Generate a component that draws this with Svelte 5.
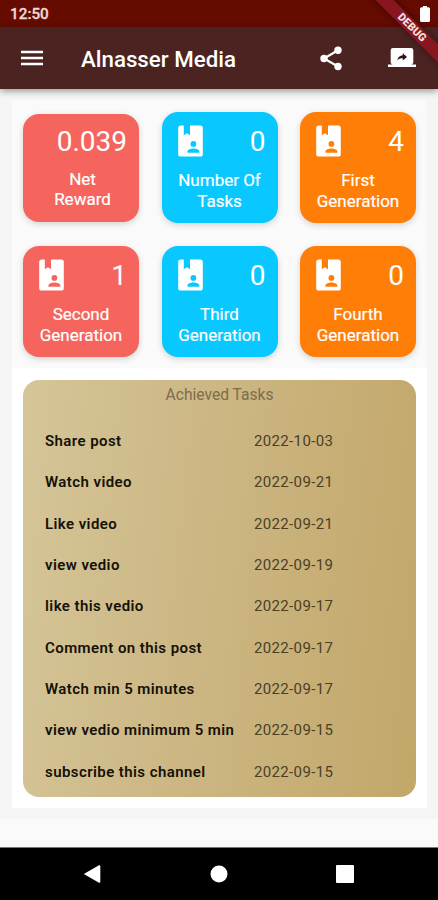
<script lang="ts">
  interface Stat {
    label: [string, string];
    value: string;
    color: 'red' | 'blue' | 'orange';
    icon: boolean;
  }

  interface Task { name: string; date: string; }

  const stats: Stat[] = [
    { label: ['Net', 'Reward'], value: '0.039', color: 'red', icon: false },
    { label: ['Number Of', 'Tasks'], value: '0', color: 'blue', icon: true },
    { label: ['First', 'Generation'], value: '4', color: 'orange', icon: true },
    { label: ['Second', 'Generation'], value: '1', color: 'red', icon: true },
    { label: ['Third', 'Generation'], value: '0', color: 'blue', icon: true },
    { label: ['Fourth', 'Generation'], value: '0', color: 'orange', icon: true },
  ];

  const tasks: Task[] = [
    { name: 'Share post', date: '2022-10-03' },
    { name: 'Watch video', date: '2022-09-21' },
    { name: 'Like video', date: '2022-09-21' },
    { name: 'view vedio', date: '2022-09-19' },
    { name: 'like this vedio', date: '2022-09-17' },
    { name: 'Comment on this post', date: '2022-09-17' },
    { name: 'Watch min 5 minutes', date: '2022-09-17' },
    { name: 'view vedio minimum 5 min', date: '2022-09-15' },
    { name: 'subscribe this channel', date: '2022-09-15' },
  ];
</script>

<div class="screen">
  <div class="status-bar">
    <span class="clock">12:50</span>
    <svg class="battery" width="10" height="16" viewBox="0 0 10 16">
      <path d="M3 0h4v1.200h1.500Q10 1.200 10 2.700v11.800Q10 16 8.500 16h-7Q0 16 0 14.500V2.700Q0 1.200 1.500 1.200H3z" fill="#fff" />
    </svg>
  </div>

  <header class="app-bar">
    <svg class="menu" width="22" height="16" viewBox="0 0 22 16">
      <path d="M0 .7h22v2.600H0zM0 6.700h22v2.600H0zM0 12.700h22v2.600H0z" fill="#fff" />
    </svg>
    <h1>Alnasser Media</h1>
    <svg class="share" width="22" height="25" viewBox="0 0 22 25">
      <path d="M18 4.300 4 12.500l14 8" fill="none" stroke="#fff" stroke-width="2.200" />
      <circle cx="18" cy="4.300" r="3.700" fill="#fff" />
      <circle cx="4" cy="12.500" r="3.700" fill="#fff" />
      <circle cx="18" cy="20.500" r="3.700" fill="#fff" />
    </svg>
    <svg class="present" width="28" height="20" viewBox="0 0 28 20">
      <path d="M5 0h18q2.300 0 2.300 2.300v11.900q0 2.100-2 2.300H28V19H0v-2.500h4.700q-2-.2-2-2.300V2.300Q2.700 0 5 0z" fill="#fff" />
      <path d="M9.300 12.200c.5-3 2.500-4.600 5.500-5V5.200l4.200 3.700-4.200 3.700v-2.300c-2.400 0-4.100.6-5.500 1.900z" fill="#2f1412" />
    </svg>
  </header>

  <div class="debug"><span>DEBUG</span></div>

  <main>
    <section class="stats">
      {#each stats as s}
        <div class="stat {s.color}" class:compact={!s.icon}>
          <div class="stat-top">
            {#if s.icon}
              <svg width="25" height="32" viewBox="0 0 25 32">
                <path fill-rule="evenodd" fill="#fff" d="M3 .5h2.800v9.800l3.100-2 3.100 2V.5h10.200q2.600 0 2.600 2.600v25.800q0 2.600-2.600 2.600H2.800Q.2 31.500.2 28.900V3.100Q.2.800 3 .5zM15.400 16a2.900 2.900 0 1 0 0 5.800 2.900 2.900 0 1 0 0-5.800zM9.400 27.800h12v-1.300c0-2-3.500-3.100-6-3.100s-6 1.100-6 3.100z" />
              </svg>
            {/if}
            <span class="value">{s.value}</span>
          </div>
          <div class="label">{s.label[0]}<br />{s.label[1]}</div>
        </div>
      {/each}
    </section>

    <section class="tasks-wrap">
      <div class="tasks">
        <h2>Achieved Tasks</h2>
        {#each tasks as t}
          <div class="task">
            <span class="task-name">{t.name}</span>
            <span class="task-date">{t.date}</span>
          </div>
        {/each}
      </div>
    </section>
  </main>

  <nav>
    <svg width="19" height="20" viewBox="0 0 19 20"><path d="M.8 10 16 1.300q1.300-.3 1.300 1v15.400q0 1.300-1.300 1z" fill="#fff" /></svg>
    <svg width="18" height="18" viewBox="0 0 18 18"><circle cx="9" cy="9" r="8.500" fill="#fff" /></svg>
    <svg width="18" height="18" viewBox="0 0 18 18"><rect width="18" height="18" rx="1" fill="#fff" /></svg>
  </nav>
</div>

<style>
  :global(body) {
    margin: 0;
  }
  .screen {
    position: relative;
    display: flex;
    flex-direction: column;
    width: 438px;
    height: 900px;
    overflow: hidden;
    background: #fafafa;
    font-family: Roboto, sans-serif;
  }
  .status-bar {
    display: flex;
    justify-content: space-between;
    align-items: center;
    box-sizing: border-box;
    flex: none;
    height: 27px;
    padding: 1px 8px 0 10px;
    background: #650b00;
  }
  .battery {
    margin-bottom: 1px;
  }
  .clock {
    font-size: 15.3px;
    font-weight: 500;
    line-height: 26px;
    color: #ecd9d7;
    -webkit-text-stroke: 0.3px;
  }
  .app-bar {
    position: relative;
    display: flex;
    align-items: center;
    box-sizing: border-box;
    flex: none;
    height: 62px;
    padding: 0 22px 0 21px;
    background: #4b2421;
    box-shadow: 0 2px 7px rgba(0, 0, 0, 0.4);
  }
  h1 {
    flex: 1;
    margin: 2px 0 0 38px;
    font-size: 22.3px;
    font-weight: 500;
    color: #fff;
    white-space: nowrap;
  }
  .share {
    margin-right: 46px;
  }
  .debug {
    position: absolute;
    top: 20.5px;
    right: -33.5px;
    width: 120px;
    height: 13px;
    transform: rotate(45deg);
    background: #871620;
    box-shadow: 0 0 6px rgba(0, 0, 0, 0.45);
    text-align: center;
    font-size: 11px;
    font-weight: 900;
    line-height: 13px;
    color: #f3dfe0;
  }
  main {
    box-sizing: border-box;
    flex: none;
    height: 730px;
    padding: 11px 11px 0 12px;
    background: #f5f5f5;
  }
  .stats {
    display: grid;
    grid-template-columns: repeat(3, 116px);
    grid-template-rows: 111px 111px;
    justify-content: space-between;
    align-items: center;
    row-gap: 23px;
    box-sizing: border-box;
    height: 268px;
    padding: 12px 11px 0;
    background: #fafafa;
  }
  .stat {
    box-sizing: border-box;
    height: 111px;
    padding: 13px 12px 0 16px;
    border-radius: 16px;
    box-shadow: 0 2px 6px rgba(0, 0, 0, 0.16);
    color: #fff;
  }
  .red { background: #f5655e; }
  .blue { background: #08c8ff; }
  .orange { background: #ff7e08; }
  .compact {
    height: 108px;
    padding-top: 11px;
  }
  .stat-top {
    display: flex;
    justify-content: space-between;
    height: 33px;
  }
  .value {
    margin-left: auto;
    font-size: 28px;
    line-height: 33px;
  }
  .label {
    margin: 12px -8px 0 -12px;
    font-size: 17px;
    line-height: 20.500px;
    text-align: center;
    -webkit-text-stroke: 0.2px;
  }
  .compact .label {
    margin-top: 11px;
    margin-right: -11px;
  }
  .tasks-wrap {
    box-sizing: border-box;
    height: 440px;
    padding: 12px 11px;
    background: #fff;
  }
  .tasks {
    box-sizing: border-box;
    height: 417px;
    border-radius: 16px;
    background: linear-gradient(96deg, #d5c598, #cbb581 50%, #c2a769);
    overflow: hidden;
  }
  h2 {
    margin: 5px 0 15.500px;
    font-size: 15.6px;
    font-weight: 400;
    line-height: 20px;
    text-align: center;
    color: #7d6d4c;
  }
  .task {
    display: grid;
    grid-template-columns: 209px 1fr;
    align-items: center;
    height: 41.300px;
    padding-left: 22px;
    font-size: 15px;
  }
  .task-name {
    font-weight: 600;
    letter-spacing: 0.42px;
    color: #151107;
    white-space: nowrap;
  }
  .task-date {
    letter-spacing: 0.35px;
    color: #4b3f26;
  }
  nav {
    display: flex;
    align-items: center;
    justify-content: space-between;
    box-sizing: border-box;
    flex: none;
    height: 53px;
    margin-top: auto;
    padding: 0 84px 0 83px;
    border-top: 1px solid #777;
    background: #000;
  }
</style>
